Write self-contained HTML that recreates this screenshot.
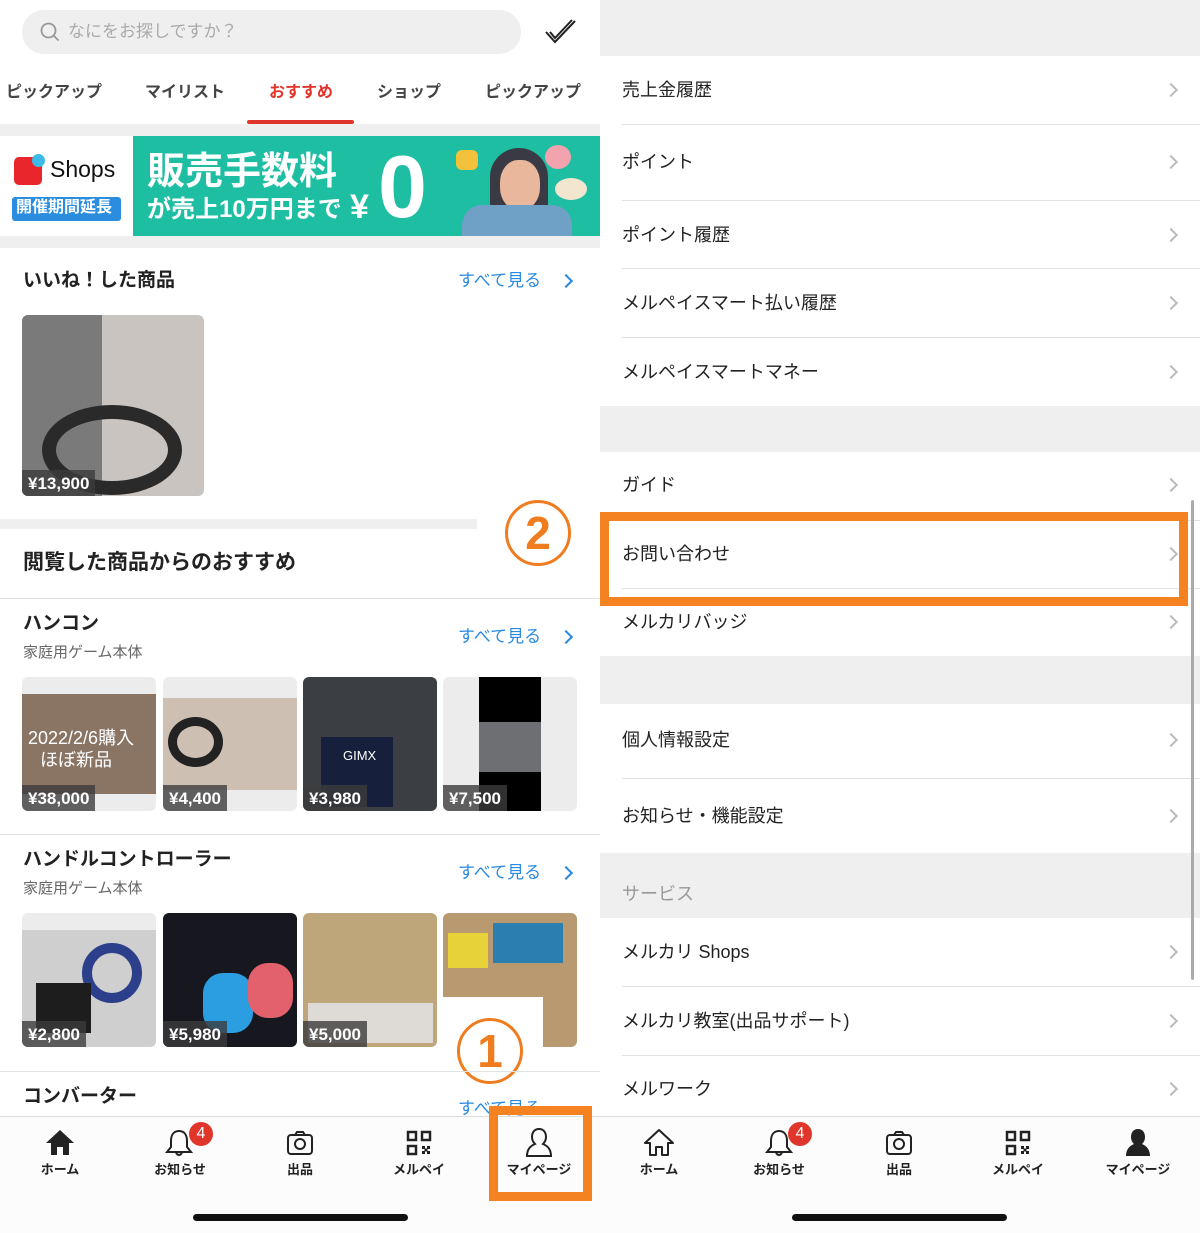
<!DOCTYPE html>
<html><head><meta charset="utf-8"><style>
*{margin:0;padding:0;box-sizing:border-box}
body{width:1200px;height:1233px;position:relative;overflow:hidden;background:#fff;font-family:"Liberation Sans","Noto Sans CJK JP",sans-serif;color:#222}
.a{position:absolute}
.t{position:absolute;white-space:nowrap;line-height:1}
.g{background:#efefef}
.blue{color:#2a8ae0}
.row{position:absolute;left:622px;font-size:18px;color:#222;white-space:nowrap;line-height:1}
.sep{position:absolute;left:622px;width:578px;height:1px;background:#e2e2e2}
.chev{position:absolute;left:1166px;width:10px;height:10px;border-right:2px solid #bbb;border-top:2px solid #bbb;transform:rotate(45deg)}
.img{position:absolute;border-radius:6px;overflow:hidden;background:#ececec}
.price{position:absolute;left:0;bottom:0;background:rgba(60,60,60,.8);color:#fff;font-size:17px;padding:5px 6px 4px;line-height:1;font-weight:bold}
.nav{position:absolute;font-size:13px;font-weight:bold;text-align:center;width:80px;line-height:1}
</style></head><body>

<!-- LEFT PANEL -->
<div class="a" style="left:22px;top:10px;width:499px;height:44px;border-radius:22px;background:#efefef"></div>
<svg class="a" style="left:40px;top:22px" width="20" height="20"><circle cx="8.5" cy="8.5" r="7" fill="none" stroke="#999" stroke-width="1.8"/><line x1="13.5" y1="13.5" x2="18.5" y2="18.5" stroke="#999" stroke-width="1.8"/></svg>
<div class="t" style="left:68px;top:23px;font-size:17px;color:#aaa">なにをお探しですか？</div>
<svg class="a" style="left:543px;top:18px" width="36" height="28"><path d="M3 14 L12 24 L32 3 M7 14 L12 20 L29 2" fill="none" stroke="#222" stroke-width="2"/></svg>

<div class="t" style="left:6px;top:85px;font-size:16px;color:#444;font-weight:bold">ピックアップ</div>
<div class="t" style="left:145px;top:85px;font-size:16px;color:#444;font-weight:bold">マイリスト</div>
<div class="t" style="left:269px;top:85px;font-size:16px;color:#e0352b;font-weight:bold">おすすめ</div>
<div class="t" style="left:377px;top:85px;font-size:16px;color:#444;font-weight:bold">ショップ</div>
<div class="t" style="left:485px;top:85px;font-size:16px;color:#444;font-weight:bold">ピックアップ</div>
<div class="a" style="left:247px;top:120px;width:107px;height:4px;background:#e0352b;border-radius:2px"></div>
<div class="a g" style="left:0;top:124px;width:600px;height:12px"></div>

<!-- banner -->
<div class="a" style="left:0;top:136px;width:133px;height:100px;background:#fff"></div>
<div class="a" style="left:14px;top:157px;width:28px;height:28px;background:#e8262c;border-radius:5px"></div>
<div class="a" style="left:32px;top:154px;width:13px;height:13px;background:#3bbbe8;border-radius:50%"></div>
<div class="t" style="left:50px;top:158px;font-size:23px;color:#111">Shops</div>
<div class="a" style="left:12px;top:197px;width:109px;height:24px;background:#2b8de0;border-radius:3px"></div>
<div class="t" style="left:16px;top:200px;font-size:16px;color:#fff;font-weight:bold">開催期間延長</div>
<div class="a" style="left:133px;top:136px;width:467px;height:100px;background:#1ebea3"></div>
<div class="t" style="left:147px;top:153px;font-size:38px;color:#fff;font-weight:bold">販売手数料</div>
<div class="t" style="left:147px;top:198px;font-size:24px;color:#fff;font-weight:bold">が売上10万円まで</div>
<div class="t" style="left:350px;top:190px;font-size:34px;color:#fff;font-weight:bold">¥</div>
<div class="t" style="left:378px;top:143px;font-size:88px;color:#fff;font-weight:bold">0</div>
<div class="a" style="left:490px;top:148px;width:58px;height:88px;background:#3a3a44;border-radius:30px 30px 0 0"></div>
<div class="a" style="left:500px;top:160px;width:40px;height:50px;background:#e9b89c;border-radius:45%"></div>
<div class="a" style="left:462px;top:205px;width:110px;height:31px;background:#6fa1c6;border-radius:20px 20px 0 0"></div>
<div class="a" style="left:456px;top:150px;width:22px;height:20px;background:#f3c23c;border-radius:6px"></div>
<div class="a" style="left:545px;top:145px;width:26px;height:24px;background:#f2a3ad;border-radius:50%"></div>
<div class="a" style="left:555px;top:178px;width:32px;height:22px;background:#f3e6cf;border-radius:50%"></div>
<div class="a g" style="left:0;top:236px;width:600px;height:12px"></div>

<div class="t" style="left:23px;top:271px;font-size:19px;font-weight:bold;color:#222">いいね！した商品</div>
<div class="t blue" style="left:458px;top:272px;font-size:17px">すべて見る</div>
<div class="a" style="left:561px;top:276px;width:10px;height:10px;border-right:2.5px solid #2a8ae0;border-top:2.5px solid #2a8ae0;transform:rotate(45deg)"></div>
<div class="img" style="left:22px;top:315px;width:182px;height:181px;background:#c9c4bf">
 <div class="a" style="left:0;top:0;width:80px;height:181px;background:#7a7a7a"></div>
 <div class="a" style="left:20px;top:90px;width:140px;height:90px;border:14px solid #2a2a2a;border-radius:50%"></div>
 <div class="price">¥13,900</div>
</div>
<div class="a g" style="left:0;top:519px;width:477px;height:10px"></div>
<div class="t" style="left:505px;top:500px;width:66px;height:66px;border:3px solid #f07c20;border-radius:50%;color:#f07c20;font-size:46px;font-weight:bold;text-align:center;line-height:60px">2</div>
<div class="t" style="left:23px;top:552px;font-size:21px;font-weight:bold">閲覧した商品からのおすすめ</div>
<div class="a" style="left:0;top:598px;width:600px;height:1px;background:#e2e2e2"></div>

<div class="t" style="left:23px;top:614px;font-size:19px;font-weight:bold">ハンコン</div>
<div class="t" style="left:23px;top:645px;font-size:15px;color:#666">家庭用ゲーム本体</div>
<div class="t blue" style="left:458px;top:628px;font-size:17px">すべて見る</div>
<div class="a" style="left:561px;top:632px;width:10px;height:10px;border-right:2.5px solid #2a8ae0;border-top:2.5px solid #2a8ae0;transform:rotate(45deg)"></div>
<div class="img" style="left:22px;top:677px;width:134px;height:134px"><div class="a" style="top:17px;left:0;width:134px;height:100px;background:#8a7564"></div><div class="t" style="left:6px;top:52px;color:#fff;font-size:18px">2022/2/6購入</div><div class="t" style="left:18px;top:74px;color:#fff;font-size:18px">ほぼ新品</div><div class="price">¥38,000</div></div>
<div class="img" style="left:163px;top:677px;width:134px;height:134px"><div class="a" style="top:21px;left:0;width:134px;height:92px;background:#cdbfb2"></div><div class="a" style="top:40px;left:5px;width:55px;height:50px;border:9px solid #222;border-radius:50%"></div><div class="price">¥4,400</div></div>
<div class="img" style="left:303px;top:677px;width:134px;height:134px;background:#3b3f44"><div class="a" style="top:60px;left:18px;width:72px;height:70px;background:#16203c"></div><div class="t" style="left:40px;top:72px;color:#fff;font-size:13px">GIMX</div><div class="price">¥3,980</div></div>
<div class="img" style="left:443px;top:677px;width:134px;height:134px"><div class="a" style="top:0;left:36px;width:62px;height:134px;background:#000"></div><div class="a" style="top:45px;left:36px;width:62px;height:50px;background:#6e6f73"></div><div class="price">¥7,500</div></div>
<div class="a" style="left:0;top:834px;width:600px;height:1px;background:#e2e2e2"></div>

<div class="t" style="left:23px;top:850px;font-size:19px;font-weight:bold">ハンドルコントローラー</div>
<div class="t" style="left:23px;top:881px;font-size:15px;color:#666">家庭用ゲーム本体</div>
<div class="t blue" style="left:458px;top:864px;font-size:17px">すべて見る</div>
<div class="a" style="left:561px;top:868px;width:10px;height:10px;border-right:2.5px solid #2a8ae0;border-top:2.5px solid #2a8ae0;transform:rotate(45deg)"></div>
<div class="img" style="left:22px;top:913px;width:134px;height:134px"><div class="a" style="top:17px;left:0;width:134px;height:117px;background:#cfcfcf"></div><div class="a" style="top:30px;left:60px;width:60px;height:60px;border:10px solid #2c3f8a;border-radius:50%"></div><div class="a" style="top:70px;left:14px;width:55px;height:50px;background:#1d1d1d"></div><div class="price">¥2,800</div></div>
<div class="img" style="left:163px;top:913px;width:134px;height:134px;background:#17171f"><div class="a" style="top:60px;left:40px;width:50px;height:60px;background:#2a9ee0;border-radius:20px"></div><div class="a" style="top:50px;left:85px;width:45px;height:55px;background:#e3616d;border-radius:20px"></div><div class="price">¥5,980</div></div>
<div class="img" style="left:303px;top:913px;width:134px;height:134px;background:#bfa57a"><div class="a" style="top:90px;left:5px;width:125px;height:40px;background:#dedbd6"></div><div class="price">¥5,000</div></div>
<div class="img" style="left:443px;top:913px;width:134px;height:134px;background:#b99a70"><div class="a" style="top:10px;left:50px;width:70px;height:40px;background:#2a7fb0"></div><div class="a" style="top:20px;left:5px;width:40px;height:35px;background:#e8d23a"></div></div>
<div class="a" style="left:443px;top:997px;width:100px;height:120px;background:#fff"></div>
<div class="t" style="left:457px;top:1018px;width:66px;height:66px;border:3px solid #f07c20;border-radius:50%;color:#f07c20;font-size:46px;font-weight:bold;text-align:center;line-height:60px">1</div>
<div class="a" style="left:0;top:1071px;width:600px;height:1px;background:#e2e2e2"></div>
<div class="t" style="left:23px;top:1087px;font-size:19px;font-weight:bold">コンバーター</div>
<div class="t blue" style="left:458px;top:1100px;font-size:17px">すべて見る</div>

<!-- nav bars -->
<div class="a" style="left:0;top:1116px;width:1200px;height:117px;background:#fcfcfc;border-top:1px solid #ddd"></div>
<div class="a" style="left:193px;top:1214px;width:215px;height:7px;background:#111;border-radius:4px"></div>
<div class="a" style="left:792px;top:1214px;width:215px;height:7px;background:#111;border-radius:4px"></div>

<!-- left nav icons -->
<svg class="a" style="left:44px;top:1128px" width="32" height="28"><path d="M16 2 L2 15 H7 V27 H13 V19 H19 V27 H25 V15 H30 Z" fill="#222"/></svg>
<svg class="a" style="left:164px;top:1128px" width="30" height="30"><path d="M15 3 C9 3 7 8 7 13 V19 L3 24 H27 L23 19 V13 C23 8 21 3 15 3 Z M12 25 Q15 29 18 25" fill="none" stroke="#222" stroke-width="2"/></svg>
<svg class="a" style="left:286px;top:1130px" width="28" height="26"><rect x="2" y="5" width="24" height="19" rx="3" fill="none" stroke="#222" stroke-width="2"/><path d="M9 5 L11 2 H17 L19 5" fill="none" stroke="#222" stroke-width="2"/><circle cx="14" cy="14" r="5" fill="none" stroke="#222" stroke-width="2"/></svg>
<svg class="a" style="left:406px;top:1130px" width="26" height="26"><g fill="none" stroke="#222" stroke-width="2.5"><rect x="2" y="2" width="8" height="8"/><rect x="16" y="2" width="8" height="8"/><rect x="2" y="16" width="8" height="8"/></g><g fill="#222"><rect x="16" y="16" width="3" height="3"/><rect x="21" y="16" width="3" height="3"/><rect x="18.5" y="18.5" width="3" height="3"/><rect x="16" y="21" width="3" height="3"/><rect x="21" y="21" width="3" height="3"/></g></svg>
<svg class="a" style="left:524px;top:1127px" width="30" height="32"><path d="M15 2 C10 2 8 6 8 10 C8 14 10 16 11 17 C6 19 3 23 3 29 H27 C27 23 24 19 19 17 C20 16 22 14 22 10 C22 6 20 2 15 2 Z" fill="none" stroke="#222" stroke-width="2"/></svg>
<div class="nav" style="left:20px;top:1163px">ホーム</div>
<div class="nav" style="left:140px;top:1163px">お知らせ</div>
<div class="nav" style="left:260px;top:1163px">出品</div>
<div class="nav" style="left:379px;top:1163px">メルペイ</div>
<div class="nav" style="left:499px;top:1163px">マイページ</div>
<div class="a" style="left:189px;top:1122px;width:24px;height:24px;border-radius:50%;background:#e0352b;color:#fff;font-size:16px;text-align:center;line-height:24px">4</div>
<div class="a" style="left:489px;top:1106px;width:103px;height:95px;border:9px solid #f58220"></div>

<!-- RIGHT PANEL -->
<div class="a g" style="left:600px;top:0;width:600px;height:56px"></div>
<div class="row" style="top:81px">売上金履歴</div>
<div class="sep" style="top:124px"></div>
<div class="row" style="top:153px">ポイント</div>
<div class="sep" style="top:200px"></div>
<div class="row" style="top:226px">ポイント履歴</div>
<div class="sep" style="top:268px"></div>
<div class="row" style="top:294px">メルペイスマート払い履歴</div>
<div class="sep" style="top:337px"></div>
<div class="row" style="top:363px">メルペイスマートマネー</div>
<div class="a g" style="left:600px;top:406px;width:600px;height:46px"></div>
<div class="row" style="top:476px">ガイド</div>
<div class="sep" style="top:520px"></div>
<div class="row" style="top:545px">お問い合わせ</div>
<div class="sep" style="top:588px"></div>
<div class="row" style="top:613px">メルカリバッジ</div>
<div class="a g" style="left:600px;top:656px;width:600px;height:48px"></div>
<div class="row" style="top:731px">個人情報設定</div>
<div class="sep" style="top:778px"></div>
<div class="row" style="top:807px">お知らせ・機能設定</div>
<div class="a g" style="left:600px;top:853px;width:600px;height:65px"></div>
<div class="t" style="left:622px;top:885px;font-size:18px;color:#999">サービス</div>
<div class="row" style="top:943px">メルカリ Shops</div>
<div class="sep" style="top:986px"></div>
<div class="row" style="top:1012px">メルカリ教室(出品サポート)</div>
<div class="sep" style="top:1055px"></div>
<div class="row" style="top:1080px">メルワーク</div>
<div class="chev" style="top:85px"></div>
<div class="chev" style="top:157px"></div>
<div class="chev" style="top:230px"></div>
<div class="chev" style="top:298px"></div>
<div class="chev" style="top:367px"></div>
<div class="chev" style="top:480px"></div>
<div class="chev" style="top:549px"></div>
<div class="chev" style="top:617px"></div>
<div class="chev" style="top:735px"></div>
<div class="chev" style="top:811px"></div>
<div class="chev" style="top:947px"></div>
<div class="chev" style="top:1016px"></div>
<div class="chev" style="top:1084px"></div>
<div class="a" style="left:1191px;top:500px;width:3px;height:480px;background:#aaa;border-radius:2px"></div>
<div class="a" style="left:600px;top:512px;width:588px;height:94px;border:9px solid #f58220"></div>

<!-- right nav -->
<svg class="a" style="left:643px;top:1128px" width="32" height="28"><path d="M16 2 L2 15 H7 V27 H13 V19 H19 V27 H25 V15 H30 Z" fill="none" stroke="#222" stroke-width="2" stroke-linejoin="round"/></svg>
<svg class="a" style="left:764px;top:1128px" width="30" height="30"><path d="M15 3 C9 3 7 8 7 13 V19 L3 24 H27 L23 19 V13 C23 8 21 3 15 3 Z M12 25 Q15 29 18 25" fill="none" stroke="#222" stroke-width="2"/></svg>
<svg class="a" style="left:885px;top:1130px" width="28" height="26"><rect x="2" y="5" width="24" height="19" rx="3" fill="none" stroke="#222" stroke-width="2"/><path d="M9 5 L11 2 H17 L19 5" fill="none" stroke="#222" stroke-width="2"/><circle cx="14" cy="14" r="5" fill="none" stroke="#222" stroke-width="2"/></svg>
<svg class="a" style="left:1005px;top:1130px" width="26" height="26"><g fill="none" stroke="#222" stroke-width="2.5"><rect x="2" y="2" width="8" height="8"/><rect x="16" y="2" width="8" height="8"/><rect x="2" y="16" width="8" height="8"/></g><g fill="#222"><rect x="16" y="16" width="3" height="3"/><rect x="21" y="16" width="3" height="3"/><rect x="18.5" y="18.5" width="3" height="3"/><rect x="16" y="21" width="3" height="3"/><rect x="21" y="21" width="3" height="3"/></g></svg>
<svg class="a" style="left:1123px;top:1127px" width="30" height="32"><path d="M15 2 C10 2 8 6 8 10 C8 14 10 16 11 17 C6 19 3 23 3 29 H27 C27 23 24 19 19 17 C20 16 22 14 22 10 C22 6 20 2 15 2 Z" fill="#222"/></svg>
<div class="nav" style="left:619px;top:1163px">ホーム</div>
<div class="nav" style="left:739px;top:1163px">お知らせ</div>
<div class="nav" style="left:859px;top:1163px">出品</div>
<div class="nav" style="left:978px;top:1163px">メルペイ</div>
<div class="nav" style="left:1098px;top:1163px">マイページ</div>
<div class="a" style="left:788px;top:1122px;width:24px;height:24px;border-radius:50%;background:#e0352b;color:#fff;font-size:16px;text-align:center;line-height:24px">4</div>
</body></html>
